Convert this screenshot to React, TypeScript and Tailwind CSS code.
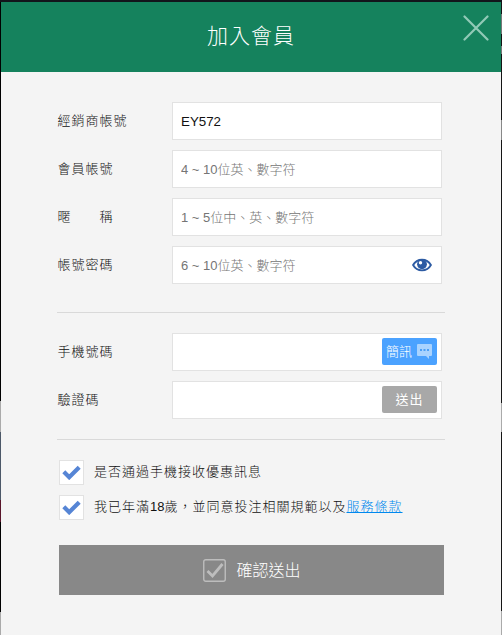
import type { ReactNode } from 'react';

function Row({ label, children }: { label: string; children?: ReactNode }) {
  return (
    <div className="flex h-[38px] items-center">
      <label className="w-[115px] shrink-0 whitespace-pre pl-[0.5px] text-[13px] tracking-[1px] text-[#111]">{label}</label>
      <div className="flex h-[38px] w-[270px] items-center border border-[#e2e2e2] bg-white pl-2 pr-1">{children}</div>
    </div>
  );
}

function Input({ placeholder, value }: { placeholder?: string; value?: string }) {
  return (
    <input
      className="h-full w-0 min-w-0 flex-1 bg-transparent text-[13.33px] text-[#111] outline-none placeholder:text-[13px] placeholder:text-[#757575]"
      placeholder={placeholder}
      defaultValue={value}
    />
  );
}

function EyeIcon() {
  return (
    <svg className="mr-[5px] shrink-0" width="20" height="14" viewBox="0 0 20 14">
      <path d="M1.1 7C5-.1 15-.1 18.9 7 15 14.1 5 14.1 1.1 7Z" fill="white" stroke="#2d5ba3" strokeWidth="1.9" />
      <circle cx="10" cy="6.3" r="4.9" fill="#2d5ba3" />
      <circle cx="8.5" cy="4.7" r="1.7" fill="white" />
    </svg>
  );
}

function ChatIcon() {
  return (
    <svg width="15" height="15" viewBox="0 0 15 15">
      <path d="M1 0h13a1 1 0 0 1 1 1v10a1 1 0 0 1-1 1h-2v3l-3-3H1a1 1 0 0 1-1-1V1a1 1 0 0 1 1-1Z" fill="#a9d3ff" />
      <path d="M3 5h2v2H3zM6.5 5h2v2h-2zM10 5h2v2h-2z" fill="#4b9ff6" />
    </svg>
  );
}

function Check({ children }: { children: ReactNode }) {
  return (
    <div className="flex h-[25px] items-center pl-[2px]">
      <span className="flex size-[25px] shrink-0 items-center justify-center border border-[#e2e2e2] bg-white pb-[2px]">
        <svg width="19" height="16" viewBox="0 0 19 16">
          <path d="M1.8 7.8 7.2 13.2 17.2 3.2" fill="none" stroke="#5685d5" strokeWidth="4.2" />
        </svg>
      </span>
      <span className="ml-[10px] whitespace-nowrap pb-[2px] text-[13px] tracking-[1px] text-[#111]">{children}</span>
    </div>
  );
}

export default function App() {
  return (
    <div className="flex h-[635px] w-[502px] flex-col overflow-hidden bg-[#12141b] font-['Liberation_Sans','Noto_Sans_CJK_TC',sans-serif] font-light">
      <div className="h-[2px] shrink-0" />
      <div className="flex min-h-0 flex-1">
        <div className="flex w-px flex-col bg-black">
          <i className="mt-[399px] h-[31px] bg-[#aaa]" />
          <i className="h-[68px] bg-[#4c5868]" />
          <i className="h-[22px] bg-[#59152a]" />
          <i className="mt-[90px] flex-1 bg-[#aaa]" />
        </div>
        <main className="w-[500px] bg-[#f4f4f4]">
          <header className="relative flex h-[70px] items-center justify-center bg-[#15825d] pb-[3px] text-[21px] tracking-[1px] text-white">
            <h1>加入會員</h1>
            <button className="absolute right-[12px] top-[13px]" aria-label="關閉">
              <svg width="26" height="26" viewBox="0 0 26 26">
                <path d="m1.5 1.5 23 23m0-23-23 23" stroke="#91cab7" strokeWidth="2.2" strokeLinecap="round" />
              </svg>
            </button>
          </header>
          <form className="px-[56px] pt-[30px]">
            <div className="flex flex-col gap-[10px]">
              <Row label="經銷商帳號"><Input value="EY572" /></Row>
              <Row label="會員帳號"><Input placeholder="4 ~ 10位英、數字符" /></Row>
              <Row label="暱　　稱"><Input placeholder="1 ~ 5位中、英、數字符" /></Row>
              <Row label="帳號密碼"><Input placeholder="6 ~ 10位英、數字符" /><EyeIcon /></Row>
            </div>
            <div className="mt-[28px] h-px bg-[#d9d9d9]" />
            <div className="mt-5 flex flex-col gap-[10px]">
              <Row label="手機號碼">
                <Input />
                <button type="button" className="mb-px flex h-[27px] w-[55px] items-center gap-[5px] rounded-[2px] bg-[#4ba2ff] pl-1 text-[13px] text-white">
                  簡訊<ChatIcon />
                </button>
              </Row>
              <Row label="驗證碼">
                <Input />
                <button type="button" className="mb-px h-[27px] w-[55px] rounded-[2px] bg-[#a8a8a8] text-[13px] font-normal tracking-[1px] text-white">送出</button>
              </Row>
            </div>
            <div className="mt-5 h-px bg-[#d9d9d9]" />
            <div className="mt-5 flex flex-col gap-[10px]">
              <Check>是否通過手機接收優惠訊息</Check>
              <Check>我已年滿<span className="tracking-normal">18</span>歲，並同意投注相關規範以及<a className="text-[#0088ee] underline">服務條款</a></Check>
            </div>
            <button type="button" className="ml-[2px] mt-[25px] flex h-[50px] w-[385px] items-center justify-center gap-[10px] bg-[#888] pl-px text-[16px] text-white">
              <svg width="23" height="23" viewBox="0 0 23 23" fill="none" stroke="#bdbdbd">
                <rect x=".75" y=".75" width="21.5" height="21.5" rx="2" strokeWidth="1.4" />
                <path d="m4.5 12 5 5 10-12" strokeWidth="2.8" />
              </svg>
              <span className="pt-[2px]">確認送出</span>
            </button>
          </form>
        </main>
        <div className="flex w-px flex-col bg-[#151515]">
          <i className="mt-3 h-5 bg-[#777]" />
          <i className="mt-3 h-2 bg-[#777]" />
          <i className="mt-[66px] h-5 bg-[#888]" />
          <i className="mt-[263px] h-[29px] bg-[#aaa]" />
          <i className="mt-[179px] flex-1 bg-[#aaa]" />
        </div>
      </div>
    </div>
  );
}
